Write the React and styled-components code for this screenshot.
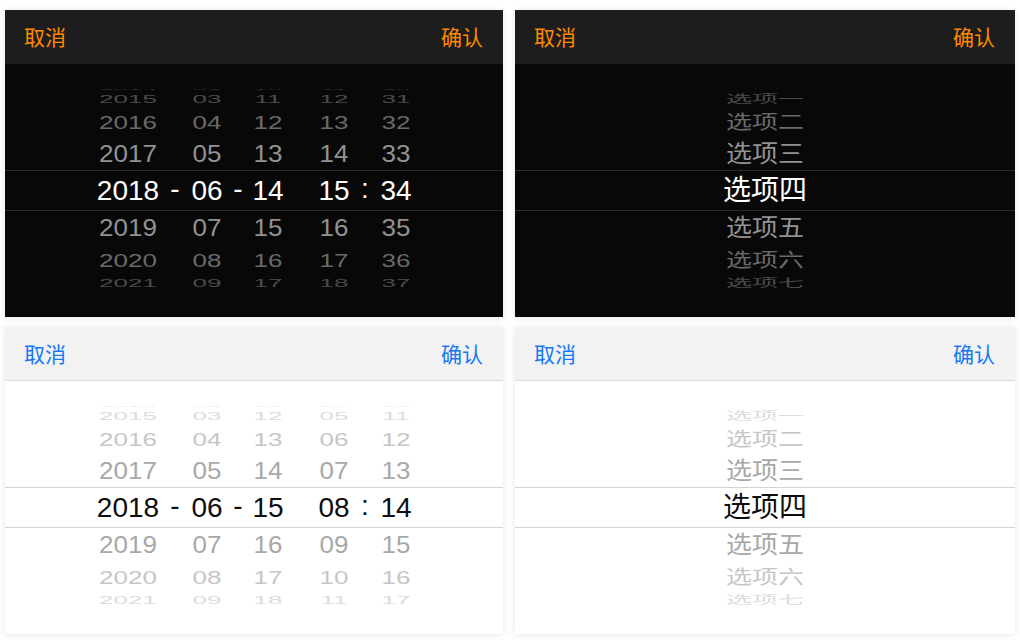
import React from "react";
import styled, { createGlobalStyle } from "styled-components";

const GlobalStyle = createGlobalStyle`
  html, body {
    margin: 0;
    background: #ffffff;
  }
  body {
    font-family: "Liberation Sans", "Noto Sans CJK SC", sans-serif;
  }
`;

const themes = {
  dark: {
    header: "#1d1d1d",
    headerBorder: "transparent",
    body: "#080808",
    action: "#ff8a00",
    line: "#2a2a2a",
    fade: ["#ffffff", "#929292", "#6a6a6a", "#4b4b4b", "#333333"],
  },
  light: {
    header: "#f2f2f2",
    headerBorder: "#dcdcdc",
    body: "#ffffff",
    action: "#1579f6",
    line: "#d3d3d3",
    fade: ["#0d0d0d", "#a8a8a8", "#c6c6c6", "#dcdcdc", "#e8e8e8"],
  },
};

// wheel radius and the angle between two rows
const RADIUS = 102.5;
const STEP = (21.2 * Math.PI) / 180;

const pad = (n) => String(n).padStart(2, "0");
const around = (center, fmt = (n) => String(n)) =>
  [-4, -3, -2, -1, 0, 1, 2, 3, 4].map((d) => ({ offset: d, label: fmt(center + d) }));

export default function App() {
  return (
    <>
      <GlobalStyle />
      <Page>
        <DatePicker theme={themes.dark} value={[2018, 6, 14, 15, 34]} />
        <OptionPicker theme={themes.dark} />
        <DatePicker theme={themes.light} value={[2018, 6, 15, 8, 14]} />
        <OptionPicker theme={themes.light} />
      </Page>
    </>
  );
}

const PickerShell = ({ theme, children }) => (
  <Panel $t={theme}>
    <Header $t={theme}>
      <Action $t={theme}>取消</Action>
      <Action $t={theme}>确认</Action>
    </Header>
    <Body $t={theme}>
      <Band $t={theme} />
      <Wheels>{children}</Wheels>
    </Body>
  </Panel>
);

const Wheel = ({ items, width, theme }) => (
  <Column $width={width}>
    {items.map(({ offset, label }) => {
      const angle = offset * STEP;
      return (
        <Item
          key={offset}
          $selected={offset === 0}
          $color={theme.fade[Math.abs(offset)]}
          $y={RADIUS * Math.sin(angle)}
          $scale={Math.cos(angle)}
        >
          {label}
        </Item>
      );
    })}
  </Column>
);

const Sep = ({ children, width, theme }) => (
  <Column $width={width}>
    <SepMark $color={theme.fade[0]}>{children}</SepMark>
  </Column>
);

const DatePicker = ({ theme, value }) => {
  const [y, mo, d, h, mi] = value;
  return (
    <PickerShell theme={theme}>
      <Wheel theme={theme} width={66} items={around(y)} />
      <Sep theme={theme} width={28}>-</Sep>
      <Wheel theme={theme} width={36} items={around(mo, pad)} />
      <Sep theme={theme} width={26}>-</Sep>
      <Wheel theme={theme} width={34} items={around(d, pad)} />
      <Gap />
      <Wheel theme={theme} width={34} items={around(h, pad)} />
      <Sep theme={theme} width={28}>:</Sep>
      <Wheel theme={theme} width={34} items={around(mi, pad)} />
    </PickerShell>
  );
};

const OPTIONS = ["选项一", "选项二", "选项三", "选项四", "选项五", "选项六", "选项七"];

const OptionPicker = ({ theme }) => (
  <PickerShell theme={theme}>
    <Wheel
      theme={theme}
      width={120}
      items={OPTIONS.map((label, i) => ({ offset: i - 3, label }))}
    />
  </PickerShell>
);

const Page = styled.div`
  display: grid;
  grid-template-columns: 498px 500px;
  grid-auto-rows: 307px;
  column-gap: 12px;
  row-gap: 10px;
  padding: 10px 5px;
`;

const Panel = styled.div`
  display: flex;
  flex-direction: column;
  background: ${(p) => p.$t.body};
  box-shadow: 0 1px 7px rgba(0, 0, 0, 0.1);
  overflow: hidden;
`;

const Header = styled.div`
  height: 54px;
  box-sizing: border-box;
  display: flex;
  align-items: center;
  justify-content: space-between;
  padding: 0 20px 0 19px;
  background: ${(p) => p.$t.header};
  border-bottom: 1px solid ${(p) => p.$t.headerBorder};
`;

const Action = styled.span`
  font-family: "Noto Sans CJK SC", sans-serif;
  font-size: 21px;
  line-height: 1;
  color: ${(p) => p.$t.action};
`;

const Body = styled.div`
  flex: 1;
  display: grid;
  align-items: center;
`;

const Band = styled.div`
  grid-area: 1 / 1;
  height: 41px;
  box-sizing: border-box;
  border-top: 1px solid ${(p) => p.$t.line};
  border-bottom: 1px solid ${(p) => p.$t.line};
`;

const Wheels = styled.div`
  grid-area: 1 / 1;
  height: ${RADIUS * 2}px;
  display: flex;
  justify-content: center;
  overflow: hidden;
`;

const Column = styled.div`
  width: ${(p) => p.$width}px;
  display: grid;
  align-items: center;
  justify-items: center;
`;

const Item = styled.div`
  grid-area: 1 / 1;
  white-space: nowrap;
  line-height: 1;
  font-size: ${(p) => (p.$selected ? 28 : 26)}px;
  color: ${(p) => p.$color};
  transform: translateY(${(p) => p.$y}px) scaleY(${(p) => p.$scale});
`;

const SepMark = styled.div`
  font-size: 28px;
  line-height: 1;
  color: ${(p) => p.$color};
  transform: translateY(-2px);
`;

const Gap = styled.div`
  width: 32px;
`;
